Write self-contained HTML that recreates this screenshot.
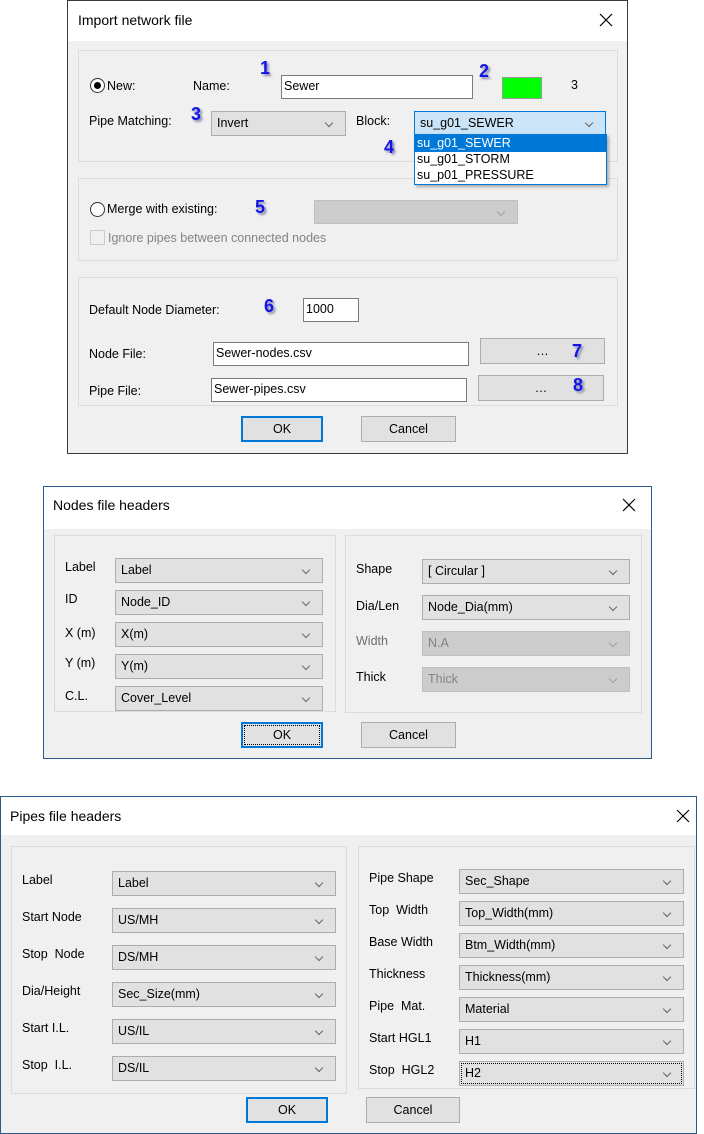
<!DOCTYPE html>
<html><head><meta charset="utf-8"><style>
*{box-sizing:border-box;margin:0;padding:0}
body{width:704px;height:1134px;background:#fff;position:relative;font-family:"Liberation Sans",Arial,sans-serif;font-size:12.5px;color:#000;overflow:hidden}
.a{position:absolute}
.dlg{position:absolute;background:#f0f0f0}
.tb{position:absolute;left:0;right:0;top:0;background:#fff}
.tt{position:absolute;font-size:14px}
.x{position:absolute;width:14px;height:14px}
.grp{position:absolute;border:1px solid #dcdcdc}
.cb{position:absolute;background:#e1e1e1;border:1px solid #adadad;height:25px;padding:4px 0 0 5px;white-space:nowrap}
.cb.dis{background:#cccccc;border-color:#bfbfbf;color:#838383}
.cb::after{content:"";position:absolute;right:13px;top:8px;width:5px;height:5px;border-right:1px solid #666;border-bottom:1px solid #666;transform:rotate(45deg)}
.cb.dis::after{border-color:#a0a0a0}
.in{position:absolute;background:#fff;border:1px solid #7a7a7a;height:24px;padding:3px 0 0 2px}
.btn{position:absolute;background:#e1e1e1;border:1px solid #adadad;text-align:center;padding-top:5px}
.ok{border:2px solid #0078d7;padding-top:4px}
.n{position:absolute;color:#1414e6;font-weight:bold;font-size:18px;text-shadow:2px 2px 2px #8888aa}
.rad{position:absolute;width:15px;height:15px;border:1px solid #333;border-radius:50%;background:#fff}
</style></head><body>

<!-- Dialog 1 -->
<div class="dlg" style="left:67px;top:0;width:561px;height:454px;border:1px solid #3a3a3a">
  <div class="tb" style="height:40px"></div>
  <div class="tt" style="left:10px;top:11px">Import network file</div>
  <svg class="x" style="left:531px;top:12px" viewBox="0 0 14 14"><path d="M1 1L13 13M13 1L1 13" stroke="#000" stroke-width="1.2"/></svg>
</div>
<div class="grp" style="left:78px;top:50px;width:540px;height:112px"></div>
<div class="grp" style="left:78px;top:178px;width:540px;height:83px"></div>
<div class="grp" style="left:78px;top:277px;width:540px;height:129px"></div>

<div class="rad" style="left:90px;top:78px;border-width:1.5px"><div class="a" style="left:2.5px;top:2.5px;width:7px;height:7px;border-radius:50%;background:#000"></div></div>
<div class="a" style="left:107px;top:79px">New:</div>
<div class="a" style="left:193px;top:79px">Name:</div>
<div class="n" style="left:260px;top:58px">1</div>
<div class="in" style="left:281px;top:75px;width:192px">Sewer</div>
<div class="n" style="left:479px;top:61px">2</div>
<div class="a" style="left:502px;top:77px;width:40px;height:22px;background:#00ff00;border:1px solid #999"></div>
<div class="a" style="left:571px;top:78px">3</div>
<div class="a" style="left:89px;top:114px">Pipe Matching:</div>
<div class="n" style="left:191px;top:104px">3</div>
<div class="cb" style="left:211px;top:111px;width:135px">Invert</div>
<div class="a" style="left:356px;top:114px">Block:</div>
<div class="cb" style="left:414px;top:111px;width:192px;background:#cce4f7;border-color:#0078d7">su_g01_SEWER</div>
<div class="n" style="left:384px;top:137px">4</div>
<div class="a" style="left:414px;top:134px;width:193px;height:51px;background:#fff;border:1px solid #0078d7;box-shadow:2px 2px 3px rgba(0,0,0,.3)">
  <div style="background:#0078d7;color:#fff;height:17px;padding:1px 0 0 2px">su_g01_SEWER</div>
  <div style="height:16px;padding:0 0 0 2px">su_g01_STORM</div>
  <div style="height:16px;padding:0 0 0 2px">su_p01_PRESSURE</div>
</div>

<div class="rad" style="left:90px;top:202px"></div>
<div class="a" style="left:107px;top:202px">Merge with existing:</div>
<div class="n" style="left:255px;top:197px">5</div>
<div class="cb dis" style="left:314px;top:200px;width:204px;height:24px"></div>
<div class="a" style="left:90px;top:230px;width:15px;height:15px;border:1px solid #ccc;background:#f0f0f0"></div>
<div class="a" style="left:108px;top:231px;color:#838383">Ignore pipes between connected nodes</div>

<div class="a" style="left:89px;top:303px">Default Node Diameter:</div>
<div class="n" style="left:264px;top:296px">6</div>
<div class="in" style="left:303px;top:298px;width:56px">1000</div>
<div class="a" style="left:89px;top:347px">Node File:</div>
<div class="in" style="left:213px;top:342px;width:256px">Sewer-nodes.csv</div>
<div class="btn" style="left:480px;top:338px;width:125px;height:26px">…</div>
<div class="n" style="left:572px;top:341px">7</div>
<div class="a" style="left:89px;top:384px">Pipe File:</div>
<div class="in" style="left:211px;top:378px;width:256px">Sewer-pipes.csv</div>
<div class="btn" style="left:478px;top:375px;width:126px;height:26px">…</div>
<div class="n" style="left:573px;top:375px">8</div>
<div class="btn ok" style="left:241px;top:416px;width:82px;height:26px">OK</div>
<div class="btn" style="left:361px;top:416px;width:95px;height:26px">Cancel</div>

<!-- Dialog 2 -->
<div class="dlg" style="left:43px;top:486px;width:609px;height:273px;border:1px solid #2b5a8c">
  <div class="tb" style="height:42px"></div>
  <div class="tt" style="left:9px;top:10px">Nodes file headers</div>
  <svg class="x" style="left:578px;top:11px" viewBox="0 0 14 14"><path d="M1 1L13 13M13 1L1 13" stroke="#000" stroke-width="1.2"/></svg>
</div>
<div class="grp" style="left:54px;top:535px;width:282px;height:177px"></div>
<div class="grp" style="left:345px;top:535px;width:297px;height:178px"></div>
<div class="a" style="left:65px;top:560px">Label</div><div class="cb" style="left:115px;top:558px;width:208px">Label</div>
<div class="a" style="left:65px;top:592px">ID</div><div class="cb" style="left:115px;top:590px;width:208px">Node_ID</div>
<div class="a" style="left:65px;top:626px">X (m)</div><div class="cb" style="left:115px;top:622px;width:208px">X(m)</div>
<div class="a" style="left:65px;top:656px">Y (m)</div><div class="cb" style="left:115px;top:654px;width:208px">Y(m)</div>
<div class="a" style="left:65px;top:689px">C.L.</div><div class="cb" style="left:115px;top:686px;width:208px">Cover_Level</div>
<div class="a" style="left:356px;top:562px">Shape</div><div class="cb" style="left:422px;top:559px;width:208px">[ Circular ]</div>
<div class="a" style="left:356px;top:599px">Dia/Len</div><div class="cb" style="left:422px;top:595px;width:208px">Node_Dia(mm)</div>
<div class="a" style="left:356px;top:634px;color:#6d6d6d">Width</div><div class="cb dis" style="left:422px;top:631px;width:208px">N.A</div>
<div class="a" style="left:356px;top:670px">Thick</div><div class="cb dis" style="left:422px;top:667px;width:208px">Thick</div>
<div class="btn ok" style="left:241px;top:722px;width:82px;height:26px;outline:1px dotted #000;outline-offset:-4px">OK</div>
<div class="btn" style="left:361px;top:722px;width:95px;height:26px">Cancel</div>

<!-- Dialog 3 -->
<div class="dlg" style="left:0;top:796px;width:697px;height:338px;border:1px solid #2b5a8c">
  <div class="tb" style="height:38px"></div>
  <div class="tt" style="left:9px;top:11px">Pipes file headers</div>
  <svg class="x" style="left:675px;top:12px" viewBox="0 0 14 14"><path d="M1 1L13 13M13 1L1 13" stroke="#000" stroke-width="1.2"/></svg>
</div>
<div class="grp" style="left:11px;top:846px;width:336px;height:248px"></div>
<div class="grp" style="left:358px;top:846px;width:337px;height:243px"></div>
<div class="a" style="left:22px;top:873px">Label</div><div class="cb" style="left:112px;top:871px;width:224px">Label</div>
<div class="a" style="left:22px;top:910px">Start Node</div><div class="cb" style="left:112px;top:908px;width:224px">US/MH</div>
<div class="a" style="left:22px;top:947px">Stop&nbsp; Node</div><div class="cb" style="left:112px;top:945px;width:224px">DS/MH</div>
<div class="a" style="left:22px;top:984px">Dia/Height</div><div class="cb" style="left:112px;top:982px;width:224px">Sec_Size(mm)</div>
<div class="a" style="left:22px;top:1021px">Start I.L.</div><div class="cb" style="left:112px;top:1019px;width:224px">US/IL</div>
<div class="a" style="left:22px;top:1058px">Stop&nbsp; I.L.</div><div class="cb" style="left:112px;top:1056px;width:224px">DS/IL</div>
<div class="a" style="left:369px;top:871px">Pipe Shape</div><div class="cb" style="left:459px;top:869px;width:225px">Sec_Shape</div>
<div class="a" style="left:369px;top:903px">Top&nbsp; Width</div><div class="cb" style="left:459px;top:901px;width:225px">Top_Width(mm)</div>
<div class="a" style="left:369px;top:935px">Base Width</div><div class="cb" style="left:459px;top:933px;width:225px">Btm_Width(mm)</div>
<div class="a" style="left:369px;top:967px">Thickness</div><div class="cb" style="left:459px;top:965px;width:225px">Thickness(mm)</div>
<div class="a" style="left:369px;top:999px">Pipe&nbsp; Mat.</div><div class="cb" style="left:459px;top:997px;width:225px">Material</div>
<div class="a" style="left:369px;top:1031px">Start HGL1</div><div class="cb" style="left:459px;top:1029px;width:225px">H1</div>
<div class="a" style="left:369px;top:1063px">Stop&nbsp; HGL2</div><div class="cb" style="left:459px;top:1061px;width:225px;outline:1px dotted #000;outline-offset:-3px">H2</div>
<div class="btn ok" style="left:246px;top:1097px;width:82px;height:26px">OK</div>
<div class="btn" style="left:366px;top:1097px;width:94px;height:26px">Cancel</div>
</body></html>
